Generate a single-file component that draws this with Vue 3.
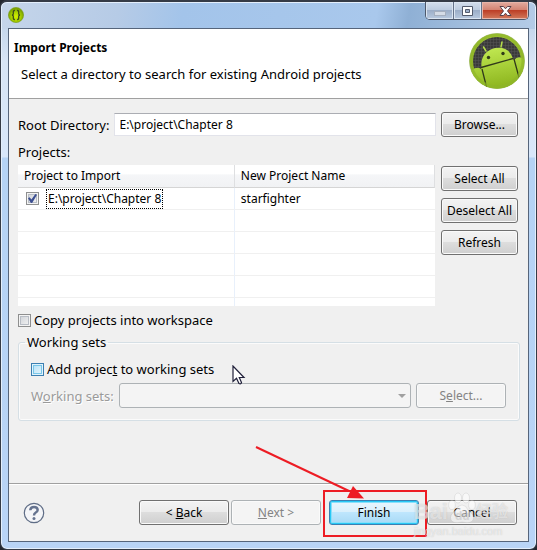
<script setup>
import { ref } from 'vue'

const rootDir = ref('E:\\project\\Chapter 8')
const projects = ref([
    { path: 'E:\\project\\Chapter 8', name: 'starfighter', checked: true }
])
const copyProjects = ref(false)
const addToSets = ref(false)
const workingSet = ref('')

// blank grid rows under the projects
const emptyRows = 5

const setAll = (val) => {
    projects.value.forEach(p => p.checked = val)
}
</script>

<template>
    <div class="window">
        <div class="titlebar">
            <svg class="app-icon" viewBox="0 0 16 16">
                <defs>
                    <radialGradient id="orb" cy="0.6">
                        <stop offset="0" stop-color="#d4f000" />
                        <stop offset="0.6" stop-color="#a9d000" />
                        <stop offset="1" stop-color="#7ea500" />
                    </radialGradient>
                </defs>
                <circle cx="8" cy="8" r="7.6" fill="url(#orb)" stroke="#759813" stroke-width="0.6" />
                <path d="M6.900 3.500Q5.300 3.300 5.300 5V6.700Q5.300 8 3.900 8Q5.300 8 5.300 9.300V11Q5.300 12.700 6.900 12.500M9.100 3.500Q10.700 3.300 10.700 5V6.700Q10.700 8 12.100 8Q10.700 8 10.700 9.300V11Q10.700 12.700 9.100 12.500" fill="none" stroke="#3c4a1c" stroke-width="1.300" />
            </svg>
            <div class="controls">
                <button type="button" class="ctl" aria-label="Minimize">
                    <svg width="14" height="12"><rect x="1.5" y="6.5" width="11" height="4" fill="#d5dce7" stroke="#a5afbf" /></svg>
                </button>
                <button type="button" class="ctl" aria-label="Maximize">
                    <svg width="13" height="12">
                        <path d="M1.5 1.5h10v9h-10zM4.500 4.500v3h4v-3z" fill="#fff" fill-rule="evenodd" stroke="#535b6d" />
                    </svg>
                </button>
                <button type="button" class="ctl close" aria-label="Close">
                    <svg width="13" height="12" viewBox="0 0 13 12">
                        <path d="M1 1.500h3.500l2 2.300 2-2.300H12L8.500 6l3.500 4.500H8.500l-2-2.300-2 2.300H1L4.500 6z" fill="#fff" stroke="#57404a" />
                    </svg>
                </button>
            </div>
        </div>

        <form class="client" @submit.prevent>
            <header>
                <div class="heading">
                    <h1>Import Projects</h1>
                    <p>Select a directory to search for existing Android projects</p>
                </div>
                <svg class="logo" viewBox="0 0 56 56">
                    <defs>
                        <linearGradient id="ring" x2="0" y2="1">
                            <stop offset="0" stop-color="#a6ca38" />
                            <stop offset="1" stop-color="#7da11a" />
                        </linearGradient>
                        <linearGradient id="bot" x2="0.2" y2="1">
                            <stop offset="0" stop-color="#c4ec55" />
                            <stop offset="1" stop-color="#8eb61f" />
                        </linearGradient>
                        <pattern id="mesh" width="3" height="3" patternUnits="userSpaceOnUse">
                            <rect width="3" height="3" fill="#3a3a3a" />
                            <path d="M0 0H3M0 0V3" stroke="#565656" />
                        </pattern>
                        <clipPath id="disc"><circle cx="28" cy="28" r="27.500" /></clipPath>
                    </defs>
                    <circle cx="28" cy="28" r="27.500" fill="url(#ring)" stroke="#9bb36a" stroke-width="0.600" />
                    <circle cx="28" cy="28" r="24" fill="url(#mesh)" />
                    <g clip-path="url(#disc)">
                        <path d="M3 37Q8 33 12 36L12.500 34.500Q11 19 26 15Q40 13 44 25.500L45 27Q49 22 55 26V56H3z" fill="url(#bot)" />
                        <path d="M17 18L14.500 14M32 14L33 9" stroke="#b5dd49" stroke-width="1.500" stroke-linecap="round" />
                        <path d="M12 34.500L44 25.500M13 36L18 56M45 26L51 48" stroke="#313a1b" stroke-width="1.300" />
                        <circle cx="19.500" cy="24.500" r="1.700" fill="#323e18" />
                        <circle cx="34" cy="20.500" r="1.700" fill="#323e18" />
                    </g>
                    <circle cx="28" cy="28" r="26" fill="none" stroke="#8fb52a" stroke-width="3" stroke-opacity="0.700" />
                </svg>
            </header>

            <main>
                <div class="row root">
                    <label for="root">Root Directory:</label>
                    <input id="root" v-model="rootDir" type="text" class="text">
                    <button type="button" class="btn side">Browse...</button>
                </div>
                <div class="caption">Projects:</div>
                <div class="row top">
                    <div class="grid">
                        <table>
                            <thead>
                                <tr>
                                    <th>Project to Import</th>
                                    <th>New Project Name</th>
                                </tr>
                            </thead>
                            <tbody>
                                <tr v-for="p in projects" :key="p.path">
                                    <td>
                                        <label class="item">
                                            <input v-model="p.checked" type="checkbox">
                                            <span class="focus">{{ p.path }}</span>
                                        </label>
                                    </td>
                                    <td>{{ p.name }}</td>
                                </tr>
                                <tr v-for="n in emptyRows" :key="n">
                                    <td></td>
                                    <td></td>
                                </tr>
                            </tbody>
                        </table>
                    </div>
                    <div class="stack">
                        <button type="button" class="btn side" @click="setAll(true)">Select All</button>
                        <button type="button" class="btn side" @click="setAll(false)">Deselect All</button>
                        <button type="button" class="btn side">Refresh</button>
                    </div>
                </div>
                <label class="check copy">
                    <input v-model="copyProjects" type="checkbox">
                    <span>Copy projects into workspace</span>
                </label>
                <fieldset>
                    <legend>Working sets</legend>
                    <label class="check">
                        <input v-model="addToSets" type="checkbox" class="hot">
                        <span>Add projec<u>t</u> to working sets</span>
                    </label>
                    <div class="row sets">
                        <label for="sets">W<u>o</u>rking sets:</label>
                        <div class="combo">
                            <select id="sets" v-model="workingSet" disabled>
                                <option value=""></option>
                            </select>
                        </div>
                        <button type="button" class="btn" disabled>S<u>e</u>lect...</button>
                    </div>
                    <svg class="cursor" width="14" height="20" viewBox="0 0 14 20">
                        <path d="M1 1V16.500L4.500 13.300L7 18.500Q9 19.500 9.500 17.500L7.300 12.500H12z" fill="#fff" stroke="#20203a" stroke-width="1.200" />
                    </svg>
                </fieldset>
            </main>

            <footer>
                <button type="button" class="help" aria-label="Help">
                    <svg width="22" height="22" viewBox="0 0 22 22">
                        <circle cx="11" cy="11" r="9.700" fill="#f4f5f8" stroke="#5f6d86" stroke-width="1.200" />
                        <path d="M7.300 8.300Q7.500 5 11 5T14.700 8Q14.700 9.500 12.500 10.700Q11 11.500 11 13.500" fill="none" stroke="#65738f" stroke-width="2.400" />
                        <circle cx="11" cy="16.500" r="1.500" fill="#65738f" />
                    </svg>
                </button>
                <div class="nav">
                    <button type="button" class="btn">&lt; <u>B</u>ack</button>
                    <button type="button" class="btn" disabled><u>N</u>ext &gt;</button>
                </div>
                <div class="finish">
                    <button type="submit" class="btn default">Finish</button>
                    <svg class="arrow" width="112" height="56" viewBox="0 0 112 56">
                        <path d="M2 3L95 47" stroke="#ed1c24" stroke-width="2" />
                        <path d="M99 42L110 54.500L93 54z" fill="#ed1c24" />
                    </svg>
                </div>
                <button type="button" class="btn">Cancel</button>
                <div class="mark">
                    <div class="brand">
                        <span>Bai</span>
                        <svg width="28" height="32" viewBox="0 0 28 32">
                            <g fill="currentColor" stroke="#999" stroke-opacity="0.200">
                                <ellipse cx="4" cy="13" rx="3.300" ry="4.500" />
                                <ellipse cx="10" cy="6" rx="3.500" ry="5" />
                                <ellipse cx="18" cy="6" rx="3.500" ry="5" />
                                <ellipse cx="24" cy="13" rx="3.300" ry="4.500" />
                                <path d="M14 13Q18 13 20 18Q27 23 25 28Q23 32 14 30Q5 32 3 28Q1 23 8 18Q10 13 14 13z" />
                            </g>
                            <text x="7" y="28" font-size="12" font-weight="bold" fill="#bbb" fill-opacity="0.500">du</text>
                        </svg>
                        <span class="cn">经验</span>
                    </div>
                    <div class="site">jingyan.baidu.com</div>
                </div>
            </footer>
        </form>
    </div>
</template>

<style>
    body {
        margin: 0;
        background: #23272f;
    }
</style>

<style scoped>
    .window {
        box-sizing: border-box;
        min-height: 100vh;
        padding: 0 7px 7px;
        display: flex;
        flex-direction: column;
        border: 1px solid #353b46;
        border-top-width: 2px;
        border-radius: 7px;
        background:
            linear-gradient(100deg, #c5d5ea 0, #b6cbe6 22%, #a3c4ea 34%, #a9c8ec 70%, #8fb0d5 76%, #b5cce7 100%) 0 0 / 100% 27px no-repeat,
            linear-gradient(#b9cde6 0, #d8e5f5 60px, #d8e7fa 155px, #b5d3f5 156px, #b9d4f6 100%);
        box-shadow: inset 0 0 0 1px #e4effc;
        font-family: "Noto Sans", "Noto Sans CJK SC", sans-serif;
        font-size: 13px;
        line-height: 16px;
        color: #000;
    }
    .titlebar {
        height: 26px;
        display: flex;
        justify-content: space-between;
    }
    .app-icon {
        width: 16px;
        height: 16px;
        margin: 5px 0 0;
    }
    .controls {
        display: flex;
        height: 18px;
        border: 1px solid #4d586b;
        border-top: 0;
        border-radius: 0 0 5px 5px;
        overflow: hidden;
        box-sizing: border-box;
    }
    .ctl {
        display: flex;
        align-items: center;
        justify-content: center;
        width: 28px;
        padding: 0;
        border: 0;
        border-right: 1px solid #66738a;
        background: linear-gradient(#d4dfed 0, #bccbdf 48%, #9caec8 50%, #b9cae0 100%);
        box-shadow: inset 0 0 0 1px #dbe5f1;
    }
    .close {
        width: 46px;
        border: 0;
        background: linear-gradient(#e3aca0 0, #d38372 46%, #bd3f27 50%, #d27a5c 100%);
        box-shadow: inset 0 0 0 1px #e7b5a9;
    }
    .client {
        flex: 1;
        display: flex;
        flex-direction: column;
        border: 1px solid #56657b;
        background: #f0f0f0;
    }
    header {
        display: flex;
        justify-content: space-between;
        height: 69px;
        padding: 0 3px 0 5px;
        background: #fff;
        border-bottom: 1px solid #a0a0a0;
    }
    h1 {
        margin: 11px 0 10px;
        font-size: 12px;
        line-height: 16px;
    }
    p {
        margin: 0 0 0 7px;
    }
    .logo {
        width: 56px;
        height: 56px;
        margin-top: 4px;
    }
    main {
        flex: 1;
        padding: 13px 8px 0 9px;
    }
    .row {
        display: flex;
        align-items: center;
        gap: 6px;
    }
    .row.top {
        align-items: flex-start;
    }
    .root, .row.top {
        margin-right: 2px;
    }
    .root, .sets {
        gap: 5px;
    }
    .text {
        flex: 1;
        min-width: 0;
        box-sizing: border-box;
        height: 23px;
        padding: 0 4px;
        border: 1px solid #e2e3ea;
        border-top-color: #abadb3;
        background: #fff;
        font: inherit;
        font-size: 12px;
    }
    .btn {
        box-sizing: border-box;
        width: 90px;
        height: 25px;
        padding: 0;
        border: 1px solid #707070;
        border-radius: 3px;
        background: linear-gradient(#f3f3f3 0, #ebebeb 48%, #dddddd 50%, #cfcfcf 100%);
        box-shadow: inset 0 0 0 1px #fafafa;
        font: inherit;
        font-size: 12px;
        color: #000;
        white-space: nowrap;
    }
    .btn.side {
        width: 77px;
    }
    .btn:disabled {
        border-color: #adb2b5;
        background: #f4f4f4;
        color: #838383;
    }
    .btn.default {
        border-color: #3c7fb1;
        background: linear-gradient(#eaf6fd 0, #d9f0fc 48%, #bee6fd 50%, #a7d9f5 100%);
        box-shadow: inset 0 0 0 1px #27c8f5, inset 0 0 0 2px #8adffa;
    }
    .caption {
        margin: 7px 0 5px;
    }
    .grid {
        flex: 1;
        height: 141px;
        overflow: hidden;
        background: #fff;
        font-size: 12px;
    }
    table {
        width: 100%;
        border-collapse: separate;
        border-spacing: 0;
        table-layout: fixed;
    }
    th, td {
        box-sizing: border-box;
        height: 22px;
        padding: 0 6px;
        border-bottom: 1px solid #f0f0f0;
        border-right: 1px solid #e8f0fb;
        text-align: left;
        font-weight: normal;
    }
    th {
        height: 23px;
        background: linear-gradient(#fff 0, #fff 40%, #f5f6f8 45%, #f1f2f4 100%);
        border-bottom-color: #d5d5d5;
        border-right-color: #dedfe1;
    }
    th:first-child {
        width: 52%;
    }
    td:first-child {
        padding-left: 8px;
    }
    td:last-child {
        border-right: 0;
    }
    .item {
        display: flex;
        align-items: center;
        gap: 8px;
    }
    .focus {
        padding: 0 1px;
        outline: 1px dotted #000;
        line-height: 18px;
    }
    .stack {
        display: flex;
        flex-direction: column;
        gap: 7px;
        padding-top: 1px;
    }
    input[type="checkbox"] {
        appearance: none;
        box-sizing: border-box;
        flex: none;
        width: 13px;
        height: 13px;
        margin: 0;
        border: 1px solid #8e8f8f;
        background: linear-gradient(135deg, #cbcfd5, #f6f6f6);
        box-shadow: inset 0 0 0 1px #f4f4f4, inset 0 0 0 2px #b8bdc5;
    }
    input[type="checkbox"]:checked::before {
        content: "";
        display: block;
        width: 9px;
        height: 9px;
        margin: 1px;
        background: #3c4f91;
        clip-path: polygon(0 48%, 18% 36%, 38% 62%, 82% 0, 100% 8%, 46% 100%, 32% 100%);
    }
    input.hot {
        border-color: #3c7fb1;
        background: linear-gradient(135deg, #b1dff5, #eaf7fd);
        box-shadow: inset 0 0 0 1px #e0f3fc, inset 0 0 0 2px #79c6e9;
    }
    .check {
        display: flex;
        align-items: center;
        gap: 3px;
    }
    .copy {
        margin-top: 6px;
    }
    fieldset {
        position: relative;
        margin: 6px 0 0;
        padding: 11px 13px 12px 12px;
        border: 1px solid #d5dfe5;
        border-radius: 3px;
        box-shadow: inset 0 0 0 1px #fbfbfb;
    }
    legend {
        margin-left: -6px;
        padding: 0 2px;
    }
    .sets {
        margin-top: 6px;
        color: #9a9a9a;
    }
    .sets label {
        text-shadow: 1px 1px #fff;
    }
    .combo {
        position: relative;
        flex: 1;
        display: flex;
    }
    .combo::after {
        content: "";
        position: absolute;
        right: 5px;
        top: 11px;
        border: 4px solid transparent;
        border-top-color: #a0a0a0;
        border-bottom: 0;
    }
    select {
        appearance: none;
        width: 100%;
        height: 25px;
        border: 1px solid #adb2b5;
        border-radius: 3px;
        background: #f4f4f4;
        opacity: 1;
    }
    .cursor {
        position: absolute;
        left: 213px;
        top: 15px;
    }
    footer {
        position: relative;
        display: flex;
        align-items: center;
        height: 57px;
        padding: 0 11px 0 14px;
        gap: 8px;
        border-top: 1px solid #a0a0a0;
        box-shadow: inset 0 1px #fff;
    }
    .help {
        display: flex;
        margin-right: auto;
        padding: 0;
        border: 0;
        background: none;
    }
    .nav {
        display: flex;
        gap: 2px;
    }
    .finish {
        position: relative;
        display: flex;
    }
    .finish::after {
        content: "";
        position: absolute;
        inset: -10px -8px -12px -6px;
        border: 2px solid #ed1c24;
        pointer-events: none;
    }
    .arrow {
        position: absolute;
        right: 53px;
        bottom: 25px;
        z-index: 1;
        pointer-events: none;
    }
    .mark {
        position: absolute;
        right: 20px;
        top: 8px;
        color: rgba(255, 255, 255, .55);
        pointer-events: none;
    }
    .brand {
        display: flex;
        align-items: flex-end;
        height: 32px;
        font: bold 22px/24px "Liberation Sans", "Noto Sans CJK SC", sans-serif;
        text-shadow: 0 0 1px rgba(150, 150, 150, .5);
    }
    .brand .cn {
        font-size: 16px;
    }
    .brand text {
        text-shadow: none;
    }
    .site {
        font: 11px/14px "Liberation Sans", sans-serif;
        text-shadow: 0 0 1px rgba(150, 150, 150, .5);
    }
</style>
